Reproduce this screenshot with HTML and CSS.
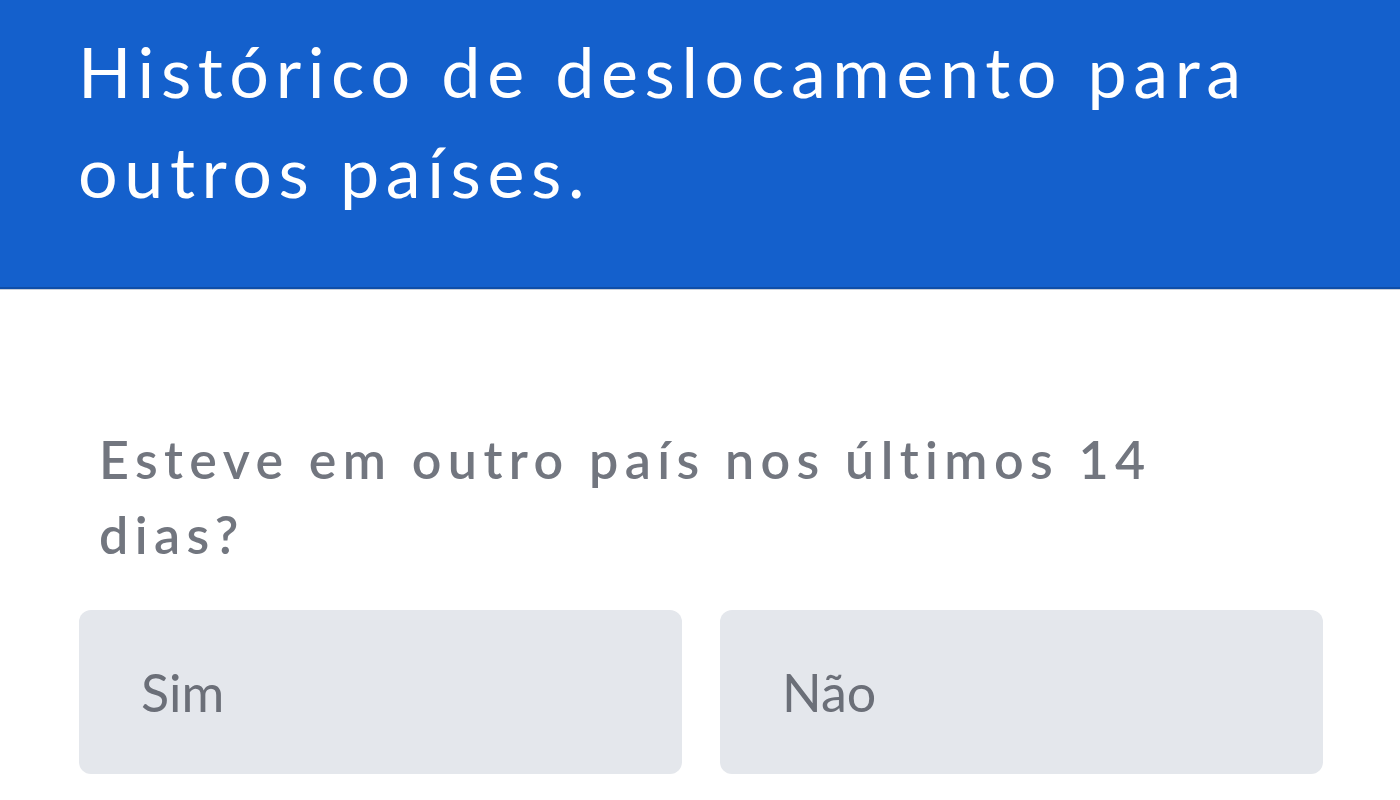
FILE: index.html
```html
<!DOCTYPE html>
<html lang="pt">

<head>
    <meta charset="UTF-8">
    <meta name="viewport" content="width=device-width, initial-scale=1.0">
    <title>Histórico de deslocamento</title>
    <link rel="stylesheet" href="styles.css">
</head>

<body>
    <header class="page-header">
        <h1>Histórico de deslocamento para outros países.</h1>
    </header>

    <main class="question">
        <p class="question-text">Esteve em outro país nos últimos 14 dias?</p>

        <div class="choices">
            <button class="choice">Sim</button>
            <button class="choice">Não</button>
        </div>
    </main>
</body>

</html>
```

FILE: styles.css
```css
body {
    font-family: 'Lato', 'Noto Sans', sans-serif;
    margin: 0;
    padding: 0;
    background-color: #fff;
}

.page-header {
    background-color: #1460cc;
    color: #fff;
    padding: 21px 60px 66px 78px;
    border-bottom: 2px solid #0f4ea8;
    box-shadow: 0 1px 0 #c8ced8;
}

.page-header h1 {
    margin: 0;
    font-size: 70px;
    font-weight: 400;
    line-height: 100px;
    letter-spacing: 6.6px;
}

.question {
    padding: 133px 77px 0 79px;
}

.question-text {
    margin: 0 0 38px;
    padding-left: 20px;
    padding-right: 120px;
    font-size: 52px;
    font-weight: 600;
    line-height: 75px;
    letter-spacing: 6.4px;
    color: #72767f;
}

.choices {
    display: grid;
    grid-template-columns: 1fr 1fr;
    gap: 38px;
}

.choice {
    display: flex;
    align-items: center;
    height: 164px;
    padding: 0 62px;
    font-family: 'Lato', 'Noto Sans', sans-serif;
    font-size: 52px;
    color: #6b6f78;
    background-color: #e4e7ec;
    border: none;
    border-radius: 12px;
    cursor: pointer;
}
```
